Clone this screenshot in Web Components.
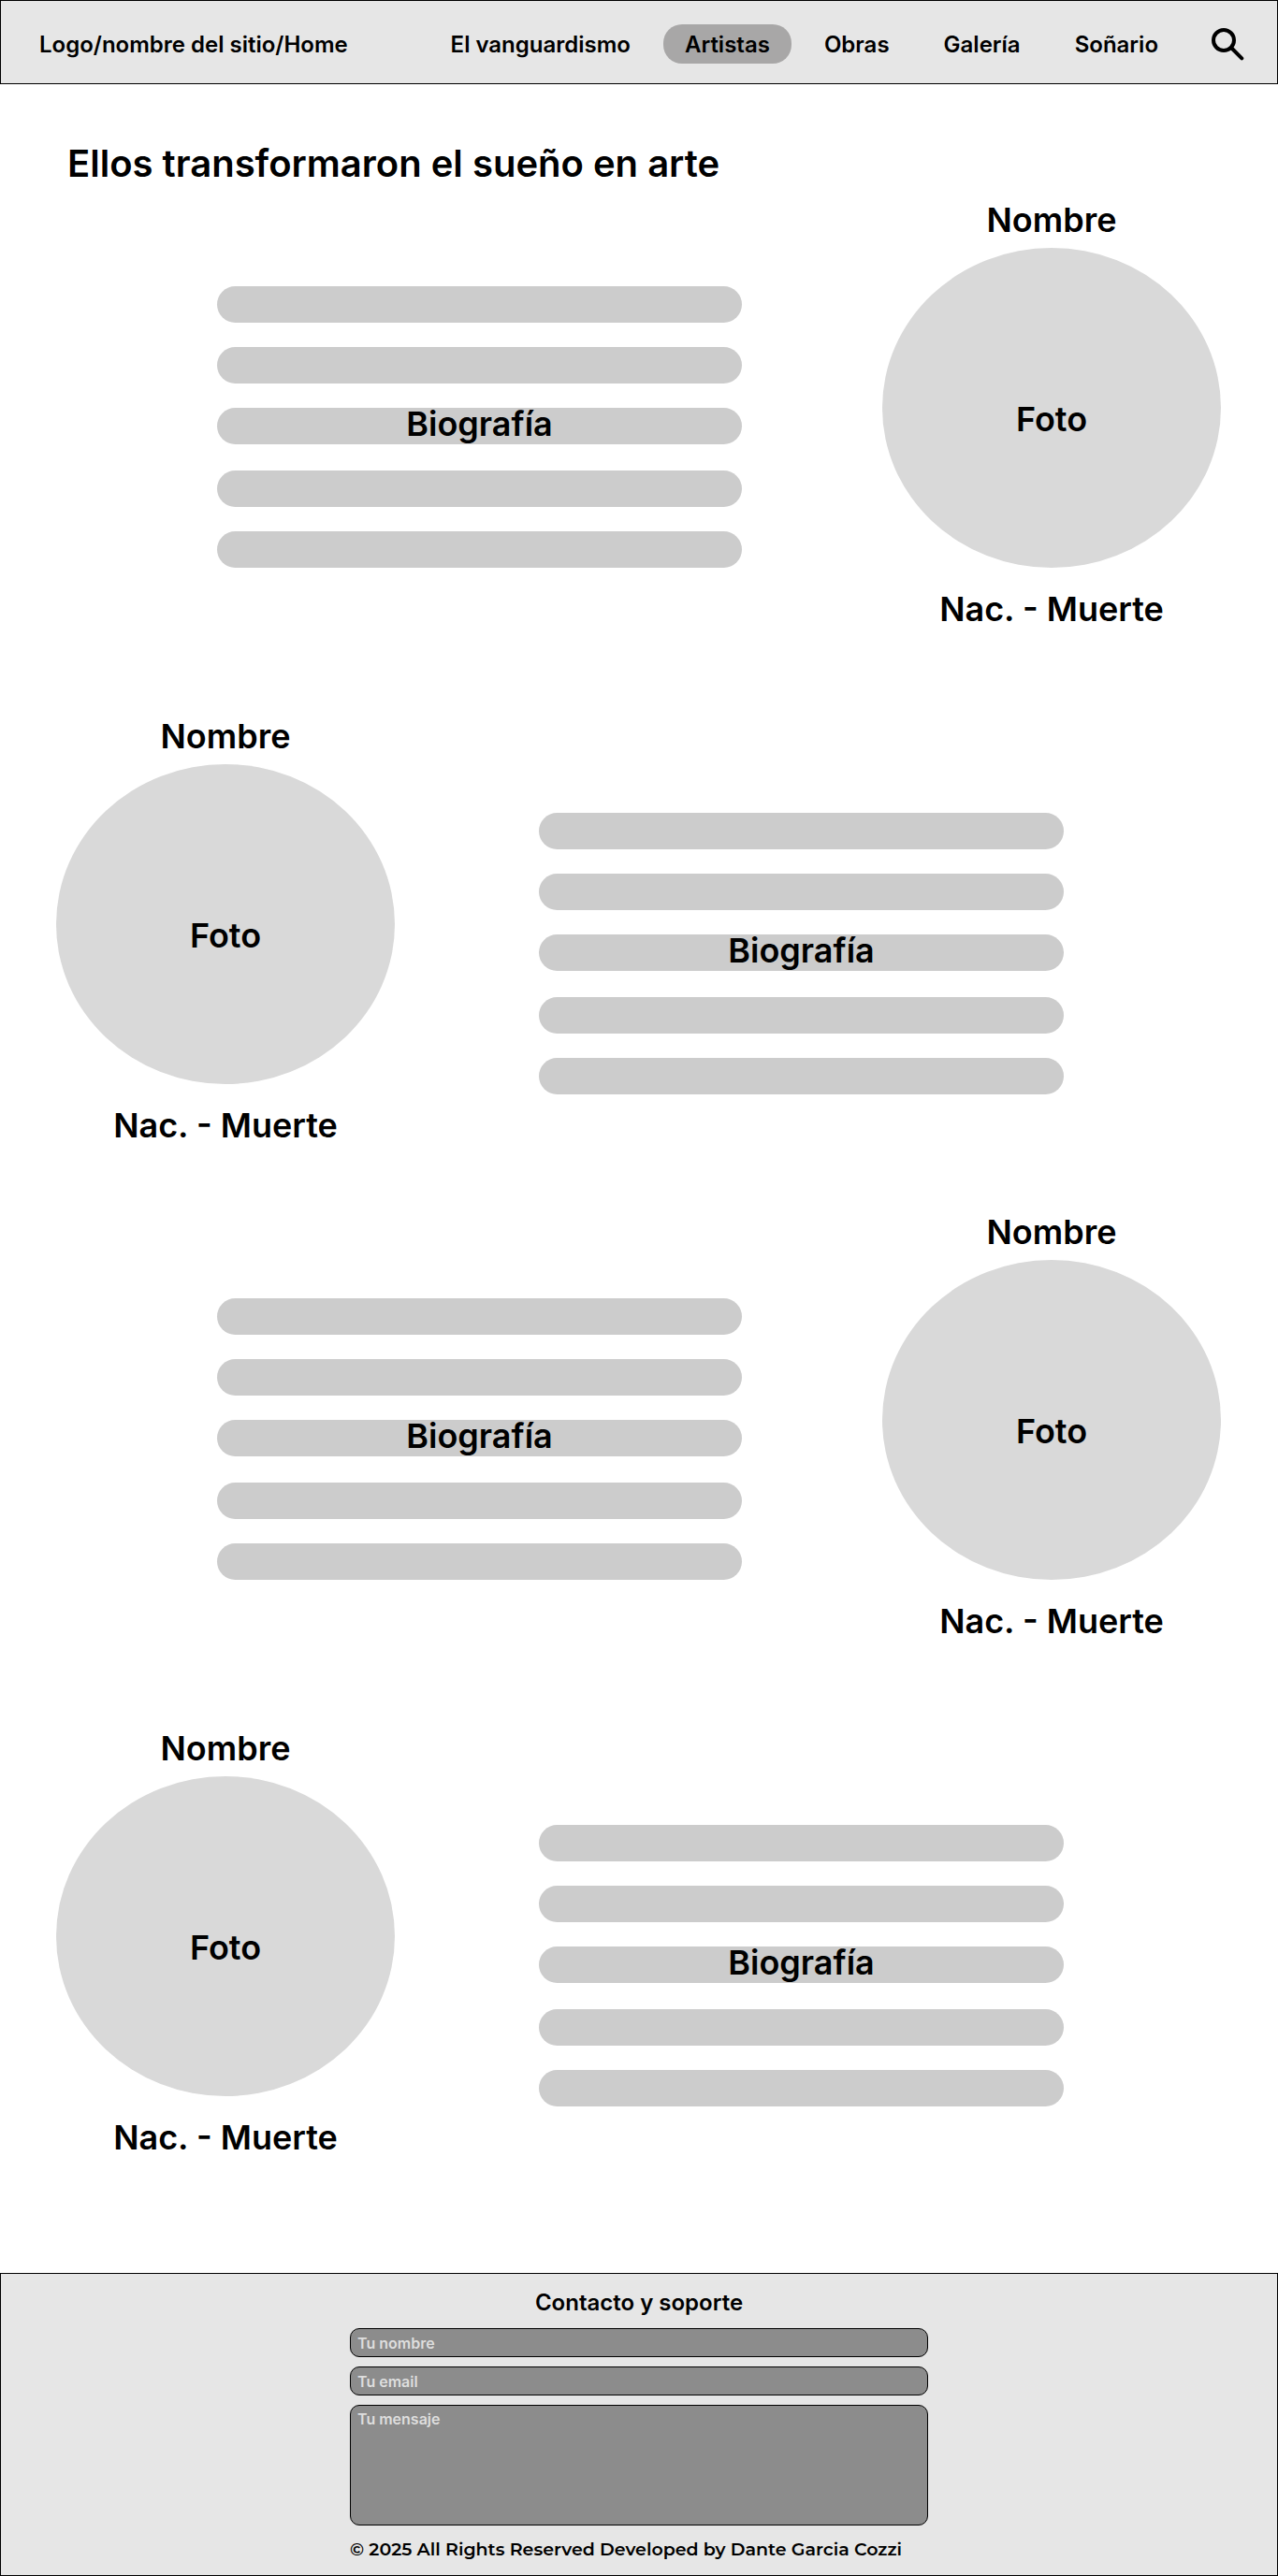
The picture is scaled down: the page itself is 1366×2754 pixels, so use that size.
<!DOCTYPE html>
<html lang="es">
<head>
<meta charset="utf-8">
<meta name="viewport" content="width=device-width, initial-scale=1">
<title>Artistas</title>
<style>
  body { margin: 0; background: #fff; color: #000; font-family: Inter, "Liberation Sans", sans-serif; font-weight: 600; }
</style>
</head>
<body>
<site-header></site-header>
<artists-page>
  <span slot="title">Ellos transformaron el sueño en arte</span>
  <artist-pair>
    <artist-row></artist-row>
    <artist-row flip></artist-row>
  </artist-pair>
  <artist-pair>
    <artist-row></artist-row>
    <artist-row flip></artist-row>
  </artist-pair>
</artists-page>
<site-footer></site-footer>

<script>
  const define = (name, html) => customElements.define(name, class extends HTMLElement {
    constructor() {
      super();
      this.attachShadow({ mode: 'open' }).innerHTML = html;
    }
  });

  define('nav-link', `
    <style>
      :host { display: block; }
      a { display: block; padding: 2px 23px 0; font-size: 24px; line-height: 40px; color: inherit; text-decoration: none; white-space: nowrap; border-radius: 20px; }
      :host([current]) a { background: #a8a7a7; }
    </style>
    <a href="#"><slot></slot></a>`);

  define('site-header', `
    <style>
      :host { display: block; }
      header { display: flex; align-items: center; justify-content: space-between; padding: 25px 35px 21px 41px; background: #e6e6e6; border: 1px solid #000; }
      .brand { padding-top: 2px; font-size: 24px; line-height: 40px; color: inherit; text-decoration: none; white-space: nowrap; }
      .end { display: flex; align-items: center; gap: 34px; }
      nav { display: flex; gap: 12px; }
      button { display: block; padding: 0; border: 0; background: none; color: inherit; }
      svg { display: block; }
    </style>
    <header>
      <a class="brand" href="#">Logo/nombre del sitio/Home</a>
      <div class="end">
        <nav>
          <nav-link>El vanguardismo</nav-link>
          <nav-link current>Artistas</nav-link>
          <nav-link>Obras</nav-link>
          <nav-link>Galería</nav-link>
          <nav-link>Soñario</nav-link>
        </nav>
        <button type="button" aria-label="Buscar">
          <svg width="35" height="35" viewBox="0 0 35 35" fill="none" stroke="currentColor" stroke-width="4" stroke-linecap="round"><circle cx="13" cy="13" r="11"/><path d="M21 21L32.3 32.3"/></svg>
        </button>
      </div>
    </header>`);

  define('artists-page', `
    <style>
      :host { display: block; padding: 61px 0 123px; }
      h1 { margin: 0 0 14px; padding: 0 72px; font-size: 40px; line-height: 48px; font-weight: 600; }
      .rows { display: flex; flex-direction: column; gap: 70px; }
    </style>
    <main>
      <h1><slot name="title"></slot></h1>
      <div class="rows"><slot></slot></div>
    </main>`);

  define('artist-pair', `
    <style>:host { display: flex; flex-direction: column; gap: 92px; }</style>
    <slot></slot>`);

  define('artist-bio', `
    <style>
      :host { display: flex; flex-direction: column; gap: 28px; }
      .group { display: flex; flex-direction: column; gap: 26px; }
      .bar { height: 39px; border-radius: 20px; background: #ccc; text-align: center; font-size: 36px; line-height: 34px; }
    </style>
    <div class="group">
      <div class="bar"></div>
      <div class="bar"></div>
      <div class="bar"><slot></slot></div>
    </div>
    <div class="group">
      <div class="bar"></div>
      <div class="bar"></div>
    </div>`);

  define('artist-portrait', `
    <style>
      :host { display: block; text-align: center; font-size: 36px; line-height: 44px; }
      h2 { margin: 0 0 8px; font: inherit; }
      .photo { display: flex; align-items: center; justify-content: center; box-sizing: border-box; height: 342px; padding-top: 24px; border-radius: 50%; background: #d9d9d9; }
      p { margin: 22px 0 0; }
    </style>
    <h2><slot name="name"></slot></h2>
    <div class="photo"><slot name="photo"></slot></div>
    <p><slot name="dates"></slot></p>`);

  define('artist-row', `
    <style>
      :host { display: flex; align-items: flex-start; gap: 150px; padding: 0 61px 0 232px; }
      :host([flip]) { flex-direction: row-reverse; gap: 154px; padding: 0 229px 0 60px; }
      artist-bio { flex: 1; padding-top: 93px; }
      :host([flip]) artist-bio { padding-top: 104px; }
      artist-portrait { flex: 0 0 362px; }
    </style>
    <artist-bio>Biografía</artist-bio>
    <artist-portrait>
      <span slot="name">Nombre</span>
      <span slot="photo">Foto</span>
      <span slot="dates">Nac. - Muerte</span>
    </artist-portrait>`);

  define('site-footer', `
    <style>
      :host { display: block; }
      footer { display: flex; flex-direction: column; align-items: center; gap: 13px; padding: 16px 16px 14px; background: #e6e6e6; border: 1px solid #000; }
      h2 { margin: 0; font-size: 24px; line-height: 29px; font-weight: 600; }
      form { display: flex; flex-direction: column; gap: 10px; width: 100%; max-width: 618px; }
      input, textarea { display: block; box-sizing: border-box; width: 100%; margin: 0; padding: 4px 7px; border: 1px solid #000; border-radius: 10px; background: #8c8c8c; color: #fff; font: inherit; font-size: 16px; line-height: 20px; resize: none; }
      input { height: 31px; }
      textarea { height: 129px; }
      ::placeholder { color: #dedede; opacity: 1; }
      p { margin: 0; width: 100%; max-width: 618px; font-family: Montserrat, Inter, sans-serif; font-size: 19px; line-height: 26px; }
    </style>
    <footer>
      <h2>Contacto y soporte</h2>
      <form>
        <input type="text" aria-label="Tu nombre" placeholder="Tu nombre">
        <input type="email" aria-label="Tu email" placeholder="Tu email">
        <textarea aria-label="Tu mensaje" placeholder="Tu mensaje"></textarea>
      </form>
      <p>© 2025 All Rights Reserved Developed by Dante Garcia Cozzi</p>
    </footer>`);
</script>
</body>
</html>
